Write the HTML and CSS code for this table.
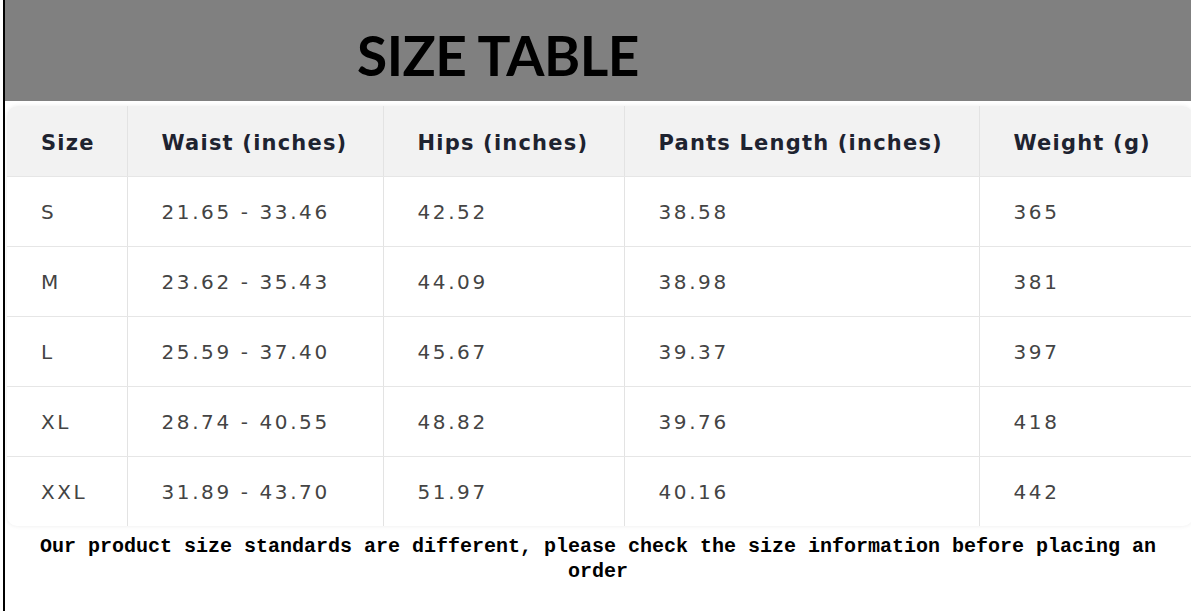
FILE: index.html
```
<!DOCTYPE html>
<html>
<head>
<meta charset="utf-8">
<link rel="stylesheet" href="styles.css">
</head>
<body>
<div class="page">
  <div class="banner"><h1 class="title">SIZE TABLE</h1></div>
  <div class="table-wrap">
    <table class="sizes">
      <colgroup>
        <col class="c1"><col class="c2"><col class="c3"><col class="c4"><col class="c5">
      </colgroup>
      <thead>
        <tr><th>Size</th><th>Waist (inches)</th><th>Hips (inches)</th><th>Pants Length (inches)</th><th>Weight (g)</th></tr>
      </thead>
      <tbody>
        <tr><td>S</td><td>21.65 - 33.46</td><td>42.52</td><td>38.58</td><td>365</td></tr>
        <tr><td>M</td><td>23.62 - 35.43</td><td>44.09</td><td>38.98</td><td>381</td></tr>
        <tr><td>L</td><td>25.59 - 37.40</td><td>45.67</td><td>39.37</td><td>397</td></tr>
        <tr><td>XL</td><td>28.74 - 40.55</td><td>48.82</td><td>39.76</td><td>418</td></tr>
        <tr><td>XXL</td><td>31.89 - 43.70</td><td>51.97</td><td>40.16</td><td>442</td></tr>
      </tbody>
    </table>
  </div>
  <p class="note">Our product size standards are different, please check the size information before placing an order</p>
</div>
</body>
</html>
```
FILE: styles.css
```
html, body {
  margin: 0;
  padding: 0;
  background: #fff;
}
.page {
  width: 1188px;
  height: 611px;
  margin-left: 3px;
  border-left: 2px solid #000;
  box-sizing: border-box;
  overflow: hidden;
}
.banner {
  height: 101px;
  background: #808080;
  box-sizing: border-box;
  padding-left: 352px;
  padding-top: 22px;
}
.title {
  margin: 0;
  font-family: Lato, "Liberation Sans", sans-serif;
  font-weight: 700;
  font-size: 55px;
  line-height: 66px;
  color: #000;
  letter-spacing: -0.5px;
}
.table-wrap {
  margin: 5px 0 0 2px;
  border-radius: 10px;
  overflow: hidden;
  box-shadow: 0 0 4px rgba(0,0,0,0.08);
  width: 1186px;
}
.sizes {
  border-collapse: collapse;
  width: 100%;
  table-layout: fixed;
  font-family: "DejaVu Sans", Verdana, sans-serif;
}
.c1 { width: 120px; }
.c2 { width: 256px; }
.c3 { width: 241px; }
.c4 { width: 355px; }
.c5 { width: auto; }
.sizes th, .sizes td {
  height: 70px;
  padding: 2px 0 0 34px;
  text-align: left;
  box-sizing: border-box;
  border-left: 1px solid #e3e3e3;
  border-bottom: 1px solid #e6e6e6;
  white-space: nowrap;
}
.sizes th {
  padding-top: 4px;
}
.sizes th:first-child, .sizes td:first-child {
  border-left: none;
}
.sizes tbody tr:last-child td {
  border-bottom: none;
}
.sizes th {
  background: #f2f2f2;
  font-weight: 700;
  font-size: 21px;
  letter-spacing: 1.2px;
  color: #1e2330;
}
.sizes td {
  font-weight: 400;
  font-size: 20px;
  letter-spacing: 2.6px;
  color: #444;
}
.note {
  margin: 8px 0 0 0;
  text-align: center;
  font-family: "Liberation Mono", "DejaVu Sans Mono", monospace;
  font-weight: 700;
  font-size: 20px;
  line-height: 25px;
  color: #000;
}
```
